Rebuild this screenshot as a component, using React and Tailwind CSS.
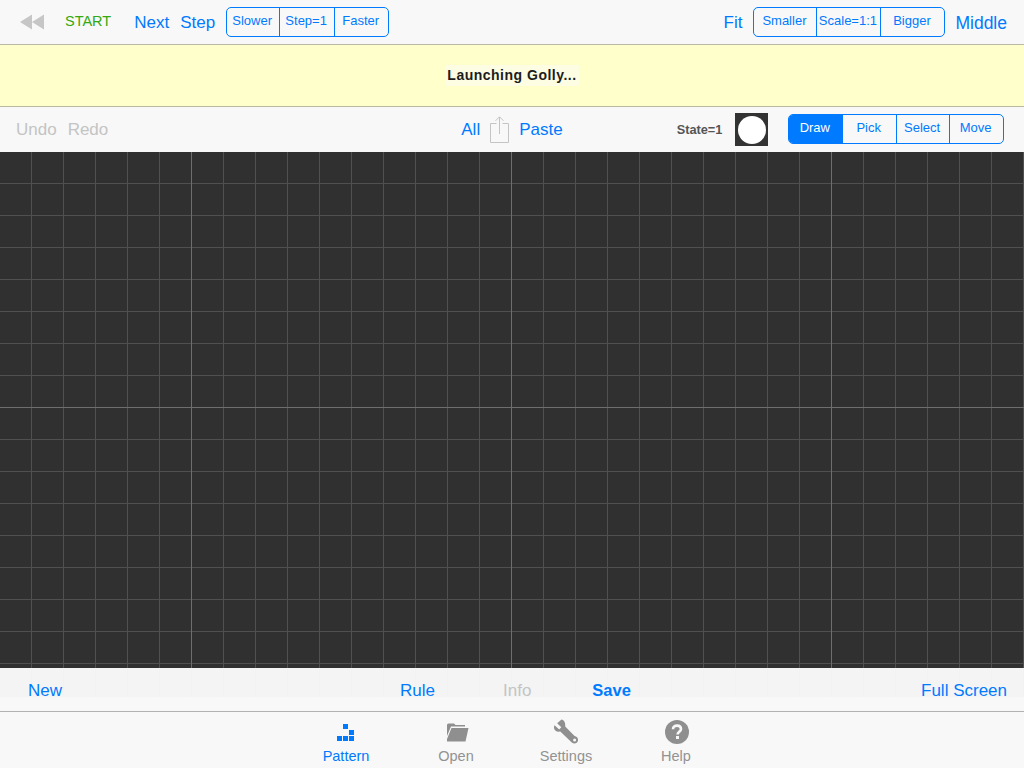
import React from "react";

const blue = "text-[#007aff]";

const Segmented = ({ items, widths, active, className = "" }) => (
  <div className={`flex h-[30px] rounded-[5px] border border-[#007aff] overflow-hidden text-[13px] ${className}`}>
    {items.map((label, i) => (
      <div
        key={label}
        style={{ width: widths[i] }}
        className={`flex items-center justify-center pb-[3px] pr-[2px] whitespace-nowrap ${
          i > 0 ? "border-l border-[#007aff]" : ""
        } ${label === active ? "bg-[#007aff] text-white" : blue}`}
      >
        {label}
      </div>
    ))}
  </div>
);

const RewindIcon = () => (
  <svg width="24" height="16" viewBox="0 0 24 16" className="shrink-0">
    <path d="M0 8 L12 0.5 V15.5 Z M12 8 L24 0.5 V15.5 Z" fill="#c6c6c6" />
  </svg>
);

const ShareIcon = () => (
  <svg width="20" height="27" viewBox="0 0 20 27" fill="none" stroke="#c4c4c4" className="shrink-0">
    <path d="M6.5 7.5 H0.5 V26.5 H18.5 V7.5 H12.5" />
    <path d="M9.5 18 V1 M5.5 4.8 L9.5 0.8 L13.5 4.8" />
  </svg>
);

const PatternIcon = () => (
  <svg width="18" height="18" viewBox="0 0 18 18" fill="#007aff" className="mb-[2px]">
    <rect x="6" y="0" width="5" height="5" />
    <rect x="12" y="6" width="5" height="5" />
    <rect x="0" y="12" width="5" height="5" />
    <rect x="6" y="12" width="5" height="5" />
    <rect x="12" y="12" width="5" height="5" />
  </svg>
);

const FolderIcon = () => (
  <svg width="22" height="19" viewBox="0 0 22 19" fill="#8f8f8f" className="mb-[2px] ml-[3px]">
    <path d="M0 2 Q0 0.5 1.5 0.5 H7 L8.5 2 H18 V3.5 H4 L0 13 Z" />
    <path d="M4.5 5 H21.5 L18.5 18.5 H0 V16 Z" />
  </svg>
);

const WrenchIcon = () => (
  <svg width="26" height="25" viewBox="0 0 26 25">
    <path
      d="M8.5 0.4 L4.2 4.3 L8.3 8.3 L6.2 10.5 L1.5 6.3 C-0.2 10 2.5 13.4 7.3 12.6 L18.8 23.6 C20.8 25.4 24.6 24.8 25 21.6 C25.4 19 23.7 17.6 21.6 17 L12.2 7.6 C12.6 3.2 11 0.8 8.5 0.4 Z"
      fill="#8f8f8f"
    />
    <circle cx="21.6" cy="21" r="1.5" fill="#f8f8f8" />
  </svg>
);

const HelpIcon = () => (
  <svg width="24" height="24" viewBox="0 0 24 24" className="ml-[1px]">
    <circle cx="12" cy="12" r="12" fill="#8f8f8f" />
    <path
      d="M8 9.2 C8 6.8 9.8 5.6 12 5.6 C14.4 5.6 16 6.9 16 9 C16 11.6 12.6 11.8 12.6 14.4"
      fill="none"
      stroke="#f8f8f8"
      strokeWidth="2.6"
    />
    <rect x="11" y="16" width="3" height="3" fill="#f8f8f8" />
  </svg>
);

const Tab = ({ icon, label, active }) => (
  <div className={`w-[110px] flex flex-col items-center ${active ? blue : "text-[#929292]"}`}>
    <div className="h-[32px] flex items-end justify-center">{icon}</div>
    <div className="mt-[4px] text-[14.5px] leading-[17px]">{label}</div>
  </div>
);

export default function App() {
  return (
    <div className="w-[1024px] h-[768px] overflow-hidden flex flex-col bg-[#f8f8f8] font-['Liberation_Sans',Arial,sans-serif]">
      {/* top toolbar */}
      <div className="h-[45px] shrink-0 border-b border-[#b9b9a8] flex items-center justify-between pl-[20px] pr-[17px] text-[17px]">
        <div className="flex items-center">
          <RewindIcon />
          <span className="ml-[21px] text-[14.5px] text-[#34a910]">START</span>
          <span className={`ml-[23px] mt-[2px] ${blue}`}>Next</span>
          <span className={`ml-[11px] mt-[2px] ${blue}`}>Step</span>
          <Segmented className="ml-[11px]" items={["Slower", "Step=1", "Faster"]} widths={[52, 55, 54]} />
        </div>
        <div className="flex items-center">
          <span className={`mt-[2px] ${blue}`}>Fit</span>
          <Segmented className="ml-[11px]" items={["Smaller", "Scale=1:1", "Bigger"]} widths={[62, 64, 64]} />
          <span className={`ml-[10px] mt-[2px] text-[17.5px] ${blue}`}>Middle</span>
        </div>
      </div>

      {/* message bar */}
      <div className="h-[62px] shrink-0 bg-[#ffffcc] border-b border-[#b9b9a0] flex items-center justify-center">
        <div className="w-[134px] h-[21px] bg-[#fdfde4] flex items-center justify-center text-[14px] font-bold tracking-[0.5px] whitespace-nowrap text-[#1c1c1c]">
          Launching Golly...
        </div>
      </div>

      {/* edit toolbar */}
      <div className="h-[45px] shrink-0 flex items-center pl-[16px] pr-[20px] text-[17px]">
        <span className="text-[#c4c4c4]">Undo</span>
        <span className="ml-[11px] text-[#c4c4c4]">Redo</span>
        <span className={`ml-[353px] ${blue}`}>All</span>
        <div className="ml-[10px]">
          <ShareIcon />
        </div>
        <span className={`ml-[9px] ${blue}`}>Paste</span>
        <span className="ml-[114px] text-[12.75px] font-bold text-[#555555]">State=1</span>
        <div className="ml-[13px] w-[33px] h-[33px] bg-[#333333] flex items-center justify-center">
          <div className="w-[28px] h-[28px] rounded-full bg-white" />
        </div>
        <Segmented className="ml-[20px] -mt-[1px]" items={["Draw", "Pick", "Select", "Move"]} widths={[53, 54, 53, 54]} active="Draw" />
      </div>

      {/* cell grid */}
      <div
        className="h-[516px] shrink-0 bg-[#303030] bg-[linear-gradient(to_right,#6e6e6e_1px,transparent_1px),linear-gradient(to_bottom,#6e6e6e_1px,transparent_1px),linear-gradient(to_right,#505050_1px,transparent_1px),linear-gradient(to_bottom,#505050_1px,transparent_1px)] bg-[size:320px_320px,320px_320px,32px_32px,32px_32px] bg-[position:191px_0,0_255px,31px_0,0_31px]"
      />

      {/* bottom toolbar */}
      <div className="relative h-[43px] shrink-0 text-[17px]">
        <div className="absolute inset-x-0 top-0 h-[29px] bg-[#f4f4f4] bg-[linear-gradient(to_right,#f2f2f2_1px,transparent_1px)] bg-[size:32px_32px] bg-[position:31px_0]" />
        <div className="relative flex items-center h-full pl-[28px] pr-[17px] pt-[3px]">
          <span className={blue}>New</span>
          <span className={`ml-[338px] ${blue}`}>Rule</span>
          <span className="ml-[68px] text-[#c4c4c4]">Info</span>
          <span className={`ml-[61px] -mt-[1px] text-[16.5px] font-bold ${blue}`}>Save</span>
          <span className={`ml-auto ${blue}`}>Full Screen</span>
        </div>
      </div>

      {/* tab bar */}
      <div className="flex-1 border-t border-[#b2b2b2] flex justify-center pr-[2px]">
        <Tab icon={<PatternIcon />} label="Pattern" active />
        <Tab icon={<FolderIcon />} label="Open" />
        <Tab icon={<WrenchIcon />} label="Settings" />
        <Tab icon={<HelpIcon />} label="Help" />
      </div>
    </div>
  );
}
